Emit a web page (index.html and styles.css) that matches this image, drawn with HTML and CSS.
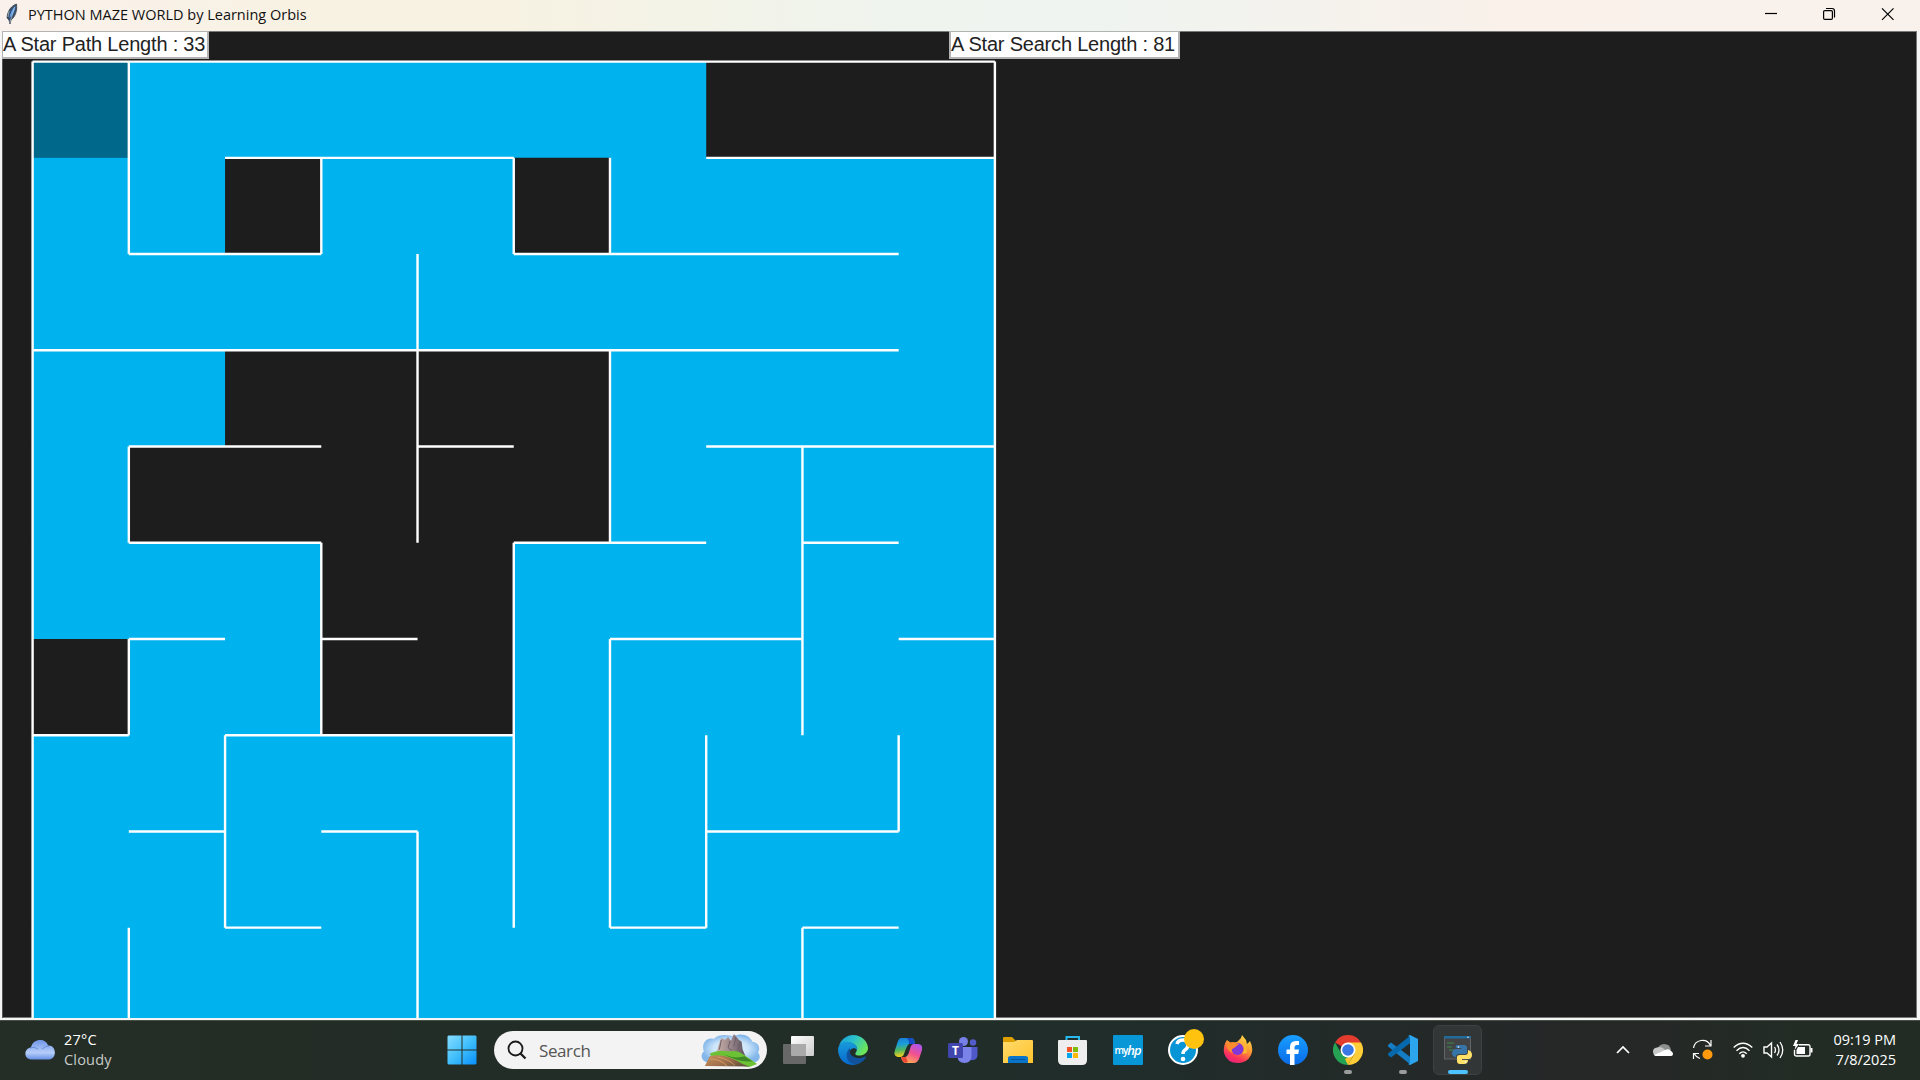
FILE: index.html
```html
<!DOCTYPE html>
<html lang="en">
<head>
<meta charset="utf-8">
<title>PYTHON MAZE WORLD by Learning Orbis</title>
<link rel="stylesheet" href="styles.css">
</head>
<body>
<div class="desktop">
  <header class="titlebar">
    <svg class="feather" width="14" height="22" viewBox="0 0 14 22">
      <path d="M11.5 1C7 2.500 2.500 7 2 15L4 17L5 21L6 17C10 14 12.500 8 11.500 1Z" fill="#35506f" stroke="#39414a" stroke-width=".8"/>
      <path d="M10.500 3C7 6 5 10 4.500 15C8 12 10 8 10.500 3Z" fill="#5e9be8"/>
      <path d="M9.500 4L4.800 20M4 8L3 14" stroke="#b9c6d4" stroke-width=".7" fill="none"/>
    </svg>
    <span class="window-title">PYTHON MAZE WORLD by Learning Orbis</span>
    <div class="window-controls">
      <svg width="58" height="30" viewBox="0 0 58 30"><path d="M23 13.500h12" stroke="#000" stroke-width="1.200"/></svg>
      <svg width="58" height="30" viewBox="0 0 58 30"><rect x="23.600" y="10.600" width="8.800" height="8.800" rx="1.200" fill="none" stroke="#000" stroke-width="1.200"/><path d="M26 8.500h6q2.500 0 2.500 2.500v6.500" fill="none" stroke="#000" stroke-width="1.200"/></svg>
      <svg width="58" height="30" viewBox="0 0 58 30"><path d="M24 8.300l11.500 11.500M35.500 8.300L24 19.800" stroke="#000" stroke-width="1.200"/></svg>
    </div>
  </header>

  <main class="canvas">
    <svg class="maze" width="970" height="961" viewBox="0 0 970 961">
      <g transform="translate(1.6 2.6) scale(96.23)">
        <rect class="searched" x="0" y="0" width="10" height="10"/>
        <rect class="goal" x="0" y="0" width="1" height="1"/>
        <path class="unvisited" d="M7 0h3v1h-3zM2 1h1v1h-1zM5 1h1v1h-1zM2 3h4v1h-4zM1 4h5v1h-5zM3 5h2v2h-2zM0 6h1v1h-1z"/>
        <path class="walls" d="M0 0H10M2 1H5M7 1H10M1 2H3M5 2H9M0 3H9M1 4H3M4 4H5M7 4H10M1 5H3M5 5H7M8 5H9M1 6H2M3 6H4M6 6H8M9 6H10M0 7H1M2 7H5M1 8H2M3 8H4M7 8H9M2 9H3M6 9H7M8 9H9"/>
        <path class="walls" d="M0 0V10M10 0V10M1 0V2M1 4V5M1 6V7M1 9V10M2 7V9M3 1V2M3 5V7M4 2V5M4 8V10M5 1V2M5 5V9M6 1V2M6 3V5M6 6V9M7 7V9M8 4V7M8 9V10M9 7V8"/>
      </g>
    </svg>
    <div class="stat stat-path">A Star Path Length : 33</div>
    <div class="stat stat-search">A Star Search Length : 81</div>
  </main>

  <footer class="taskbar">
    <div class="weather">
      <svg width="30" height="20" viewBox="0 0 30 20">
        <defs><linearGradient id="cloud" x2="0" y2="1"><stop stop-color="#7096e8"/><stop offset=".65" stop-color="#b5cdfa"/><stop offset="1" stop-color="#6790e6"/></linearGradient></defs>
        <path d="M6 19.500C-2 19 -1 8 6 7.500C8-2 21-2 23 5.500C32 5 32 19 24 19.500Z" fill="url(#cloud)"/>
        <path d="M5 8q4-2 8 1M17 9q3-3 7-3" stroke="#688fe0" fill="none"/>
      </svg>
      <div class="weather-text"><span>27°C</span><span class="muted">Cloudy</span></div>
    </div>

    <div class="apps">
      <div class="app start">
        <svg width="30" height="30" viewBox="0 0 30 30">
          <defs><linearGradient id="win" x2="1" y2="1"><stop stop-color="#87dcff"/><stop offset=".5" stop-color="#41bffb"/><stop offset="1" stop-color="#078ffc"/></linearGradient></defs>
          <path fill="url(#win)" d="M1.500.500h13v14h-14v-13zM15.500.500h13l1 1v13h-14zM.500 15.500h14v14h-13l-1-1zM15.500 15.500h14v13l-1 1h-13z"/>
        </svg>
      </div>
      <div class="search">
        <svg width="20" height="20" viewBox="0 0 20 20"><circle cx="8.500" cy="8.500" r="7" fill="none" stroke="#1b1b1b" stroke-width="1.800"/><path d="M13.500 13.500L18.500 18.500" stroke="#1b1b1b" stroke-width="2.300"/></svg>
        <span class="search-label">Search</span>
        <svg class="landscape" width="60" height="35" viewBox="0 0 62 36">
          <defs>
            <radialGradient id="sky"><stop stop-color="#e9f5ff"/><stop offset=".6" stop-color="#cce5fa"/><stop offset="1" stop-color="#83b7ea"/></radialGradient>
            <linearGradient id="rock"><stop stop-color="#c9b0a8"/><stop offset=".5" stop-color="#98858a"/><stop offset="1" stop-color="#5c525e"/></linearGradient>
            <linearGradient id="soil" x2="1" y2=".5"><stop stop-color="#c8935c"/><stop offset=".6" stop-color="#a06f4c"/><stop offset="1" stop-color="#69543f"/></linearGradient>
          </defs>
          <path d="M5 30C-1 27 0 21 3 19C0 12 5 4 13 6C20-1 31 3 34 3C43-1 51 3 53 9C61 10 61 17 59 20C64 27 57 32 50 31Z" fill="url(#sky)"/>
          <path d="M16 20L19 10L21 5L25 7L28 4L31 8L34 1L39 7L42 9L43 17L46 24Z" fill="url(#rock)"/>
          <path d="M21 7L19 17M30 8L28 15L32 18M36 4L34 14M40 10L38 18" stroke="#6d5d68" stroke-width="1" fill="none"/>
          <path d="M9 21Q18 17 28 19Q38 17 45 23Q51 27 58 32L50 35L14 29Z" fill="#6cc235"/>
          <path d="M23 22q12 5 22 2l8 5q-12 2-30-7" fill="#3f8829"/>
          <path d="M4 34L9 24Q24 20 43 32L50 34.500Z" fill="url(#soil)"/>
          <path d="M9 27q10-1 18 7M17 24.500q13 3 18 9" stroke="#dca66c" stroke-width=".8" fill="none"/>
        </svg>
      </div>
      <div class="app"><svg width="32" height="32" viewBox="0 0 32 32">
        <defs><linearGradient id="tv" x2="1" y2="1"><stop stop-color="#fff"/><stop offset="1" stop-color="#ccc"/></linearGradient></defs>
        <rect x="9" y="2" width="23" height="20" rx="1" fill="url(#tv)"/><rect x="1" y="10" width="23" height="20" rx="1" fill="#686868"/><path d="M9 10h14q1 0 1 1v11H10q-1 0-1-1z" fill="#aaa"/></svg></div>
      <div class="app"><svg width="30" height="30" viewBox="0 0 30 30">
        <defs><linearGradient id="edge1" x2="1" y2=".5"><stop stop-color="#1795dd"/><stop offset=".5" stop-color="#2bc2cb"/><stop offset="1" stop-color="#6be55a"/></linearGradient><linearGradient id="edge2" x2="0" y2="1"><stop stop-color="#179bdc"/><stop offset="1" stop-color="#0768cc"/></linearGradient></defs>
        <path d="M1 11C3 4 9 0 15 0C24 0 30 7 30 13C30 19 23 22 18 20C16 18 19 17 19 14C19 8 7 4 1 11Z" fill="url(#edge1)"/>
        <path d="M0 15C0 9 6 6 11 7C17 8 20 12 19 15C17 12 12 13 11 18C10 25 18 29 22 28C10 34 0 25 0 15Z" fill="url(#edge2)"/>
        <path d="M12 13C6 18 8 30 19 29C24 28 28 24 28 21C22 25 14 23 12 18Z" fill="#10529e"/></svg></div>
      <div class="app"><svg width="30" height="28" viewBox="0 0 30 28">
        <defs><linearGradient id="cp1" x2=".1" y2="1"><stop stop-color="#187bd9"/><stop offset=".35" stop-color="#1a9ed8"/><stop offset=".65" stop-color="#4fb760"/><stop offset="1" stop-color="#f5d019"/></linearGradient><linearGradient id="cp2" x1=".8" x2=".3" y2="1"><stop stop-color="#ac55ef"/><stop offset=".5" stop-color="#f3518e"/><stop offset="1" stop-color="#ffb052"/></linearGradient></defs>
        <path d="M8 2H18Q21 2 22 7L16 8Q14 9 11 18Q10 21 7 21H5Q0 20 2 14L5 5Q6 2 8 2Z" fill="url(#cp1)"/>
        <path d="M14 2H18Q21 2 22 8L16 8Q16 4 14 2Z" fill="#164bc8"/>
        <path d="M25 8Q30 8 29 14L26 23Q24 27 21 27H12Q9 26 8 21H12Q15 21 17 13Q18 8 21 8Z" fill="url(#cp2)"/>
        <path d="M8 21h5l2 5-3 1Q9 26 8 21Z" fill="#ed4b38"/></svg></div>
      <div class="app"><svg width="30" height="28" viewBox="0 0 30 28">
        <circle cx="15.500" cy="5.500" r="4.500" fill="#7780e7"/><circle cx="25" cy="6.500" r="3.200" fill="#535cc9"/><path d="M19.500 11h10v8q0 6-7 5z" fill="#5059c9"/><path d="M9.500 11h14v9q0 7-7 7t-7-7z" fill="#7b83eb"/><rect x="0" y="7" width="15" height="15" rx="1.500" fill="#4145ae"/><text class="teams-letter" x="7.500" y="18.500">T</text></svg></div>
      <div class="app"><svg width="30" height="28" viewBox="0 0 30 28">
        <defs><linearGradient id="fold" x2="1" y2="1"><stop stop-color="#ffda6b"/><stop offset="1" stop-color="#ffc32c"/></linearGradient></defs>
        <path d="M0 2Q0 1 1 1H9L13 5V10H0Z" fill="#dda000"/><path d="M0 6H11L14 4H29Q30 4 30 5V27H0Z" fill="url(#fold)"/><path d="M5 27V22Q5 20 8 20H22Q25 20 25 22V27Z" fill="#0874ca"/><path d="M8 23.500H22" stroke="#075399"/></svg></div>
      <div class="app"><svg width="30" height="30" viewBox="0 0 30 30">
        <path d="M8.500 7V2H21V7" fill="none" stroke="#27b8ee" stroke-width="2"/><path d="M0 6Q0 5 1 5H28Q29 5 29 6V25Q29 30 24 30H5Q0 30 0 25Z" fill="#eee"/><path d="M9 12h5v5h-5z" fill="#f35325"/><path d="M15 12h5v5h-5z" fill="#81bc06"/><path d="M9 18h5v5h-5z" fill="#05a6f0"/><path d="M15 18h5v5h-5z" fill="#ffba08"/></svg></div>
      <div class="app"><div class="myhp"><span class="my">my</span><span>hp</span></div></div>
      <div class="app"><svg class="overflowing" width="30" height="30" viewBox="0 0 30 30">
        <circle cx="15" cy="15" r="14" fill="#0795d5" stroke="#fff" stroke-width="2"/><path d="M9 9Q10 5 15 5Q20 5 20 10Q20 13 17 15Q15 16 15 19" fill="none" stroke="#fff" stroke-width="3.500"/><circle cx="15" cy="24" r="2.300" fill="#fff"/><circle cx="26" cy="4" r="10" fill="#ffc20e"/></svg></div>
      <div class="app"><svg width="30" height="30" viewBox="0 0 30 30">
        <defs><linearGradient id="ff" x1=".8" x2=".3" y2="1"><stop stop-color="#ffe14a"/><stop offset=".45" stop-color="#ff9631"/><stop offset=".8" stop-color="#fb315b"/><stop offset="1" stop-color="#e7227f"/></linearGradient></defs>
        <path d="M4 5L8 8L14 7L18 3L19 0L23 5L24 9L27 6Q31 14 28 20Q24 28 15 28Q4 28 1 18Q0 10 4 5Z" fill="url(#ff)"/><circle cx="14.500" cy="14" r="6" fill="#8238d8"/><path d="M3 8L10 7L16 9L11 13Q7 14 10 18Q4 17 3 8Z" fill="#ff8c2c"/><path d="M18 8Q24 13 19 19L24 18L23 9Z" fill="#ffb631"/></svg></div>
      <div class="app"><svg width="30" height="30" viewBox="0 0 30 30">
        <defs><linearGradient id="fb" x2="0" y2="1"><stop stop-color="#189eff"/><stop offset="1" stop-color="#096be9"/></linearGradient></defs>
        <circle cx="15" cy="15" r="15" fill="url(#fb)"/><path d="M12 30V19H8.500V14.500H12V12Q12 6 18 6H21V10H19Q16.500 10 16.500 12.500V14.500H21L20.300 19H16.500V30Z" fill="#fff"/></svg></div>
      <div class="app"><svg width="30" height="30" viewBox="0 0 30 30">
        <path d="M15 15L2 7.500A15 15 0 0 1 28 7.500Z" fill="#e33b2e"/><path d="M15 7.500H28A15 15 0 0 1 15 30L21.500 18.700Z" fill="#ffcd37"/><path d="M2 7.500L8.500 18.700L15 22L15 30A15 15 0 0 1 2 7.500Z" fill="#25a253"/><path d="M21.500 18.700L15 30L12 24Z" fill="#fbc62d"/><circle cx="15" cy="15" r="7.500" fill="#fff"/><circle cx="15" cy="15" r="5.800" fill="#3b78e7"/></svg><i class="running"></i></div>
      <div class="app"><svg width="30" height="30" viewBox="0 0 30 30">
        <path d="M0 10L3 7.500L23 22.500V30L0 11.500Z" fill="#147dc5"/><path d="M0 20L3 22.500L23 7.500V0L0 18.500Z" fill="#0769ad"/><path d="M22 0L30 4V26L22 30L20 29Q22 29 22 27V3Q22 1 20 1Z" fill="#2ca5ed"/></svg><i class="running"></i></div>
      <div class="app active"><svg width="30" height="30" viewBox="0 0 30 30">
        <rect x="1.500" y="2" width="26" height="22" fill="#414345" stroke="#626568"/><rect x="1" y="1" width="27" height="2.500" fill="#216b9b"/><path d="M24 2.200h2" stroke="#cde"/><path d="M4 8h7M4 12h5M6 15h5" stroke="#418b47" stroke-width="1.200"/>
        <path d="M14 10H21Q24 10 24 13V17Q24 19 21 19H16Q13 19 13 22H12Q9 21 9 18Q9 15 12 14H18V13H13Q12 10 14 10Z" fill="#3775a9"/><path d="M25 15Q29 16 29 20Q29 23 26 24H19V25H25Q25 29 21 29H17Q14 29 14 26V22Q14 20 17 20H22Q25 20 25 17Z" fill="#ffe169"/><circle cx="15.500" cy="12" r=".8" fill="#fff"/><circle cx="22.500" cy="27" r=".8" fill="#fff"/></svg><i class="running current"></i></div>
    </div>

    <div class="tray">
      <svg width="14" height="10" viewBox="0 0 14 10"><path d="M1 8L7 2L13 8" fill="none" stroke="#fff" stroke-width="1.700"/></svg>
      <svg class="onedrive" width="20" height="14" viewBox="0 0 20 14"><path d="M4 7Q6 1 11 1Q17 1 18 7L14 10H4Z" fill="#8d8f8f"/><path d="M3 13Q0 12 0 8.500Q0 5 4 4.500Q8 3 11 6L18 12Z" fill="#c8c8c8"/><path d="M3 13Q2 13 1 12L12 7Q16 5 18 8Q20 9 20 11Q20 13 17 13Z" fill="#fff"/></svg>
      <svg class="update" width="22" height="22" viewBox="0 0 22 22"><path d="M1.500 9A9 9 0 0 1 18.500 6.500M19 1V7H13M8 19.500Q4 18 2 14.500M1.500 20V14.500H7" fill="none" stroke="#fff" stroke-width="1.200"/><circle cx="15.500" cy="15.500" r="5" fill="#ff9a0d"/></svg>
      <svg class="wifi" width="20" height="16" viewBox="0 0 20 16"><path d="M.700 5.500Q10-3 19.300 5.500M3.500 8.700Q10 2.500 16.500 8.700M6.300 11.700Q10 8 13.700 11.700" fill="none" stroke="#fff" stroke-width="1.400"/><circle cx="10" cy="13.800" r="1.900" fill="#fff"/></svg>
      <svg class="volume" width="21" height="18" viewBox="0 0 21 18"><path d="M1 6H4L8.500 2V16L4 12H1Z" fill="none" stroke="#fff" stroke-width="1.400"/><path d="M11.500 6Q13.500 9 11.500 12M14 3.500Q18 9 14 14.500M17 1Q22.500 9 17 17" fill="none" stroke="#fff" stroke-width="1.300"/></svg>
      <svg class="battery" width="20" height="18" viewBox="0 0 20 18"><path d="M6 4.700H15.500Q17 4.700 17 6.500V14Q17 16 15.500 16H3.500Q1.500 16 1.500 14V10" fill="none" stroke="#fff" stroke-width="1.400"/><path d="M5 7H12V14H3.500V10Z" fill="#fff"/><path d="M18.500 8V12.500" stroke="#fff" stroke-width="2"/><path d="M2.500 0L0 6H2.500L1.500 10L6 4H3.500L5 0Z" fill="#fff"/></svg>
      <div class="clock"><span>09:19 PM</span><span>7/8/2025</span></div>
    </div>
  </footer>
</div>
</body>
</html>
```
FILE: styles.css
```css
* { box-sizing: border-box; }
body { margin: 0; overflow: hidden; }
svg { display: block; flex: none; }

.desktop {
  display: flex;
  flex-direction: column;
  width: 1920px;
  height: 1080px;
  font-family: "Open Sans", "Noto Sans", sans-serif;
}

.titlebar {
  display: flex;
  align-items: flex-start;
  height: 31px;
  background: linear-gradient(90deg, #fbf1ec 0, #f8f2e3 300px, #f7f2e2 500px, #eff4ee 900px, #eff4f1 1080px, #f9f1ea 1500px, #f9f1eb 100%);
}
.feather { margin: 3px 0 0 5px; }
.window-title {
  margin-left: 9px;
  font-size: 14.5px;
  line-height: 29px;
  white-space: nowrap;
  color: #111;
}
.window-controls { display: flex; margin-left: auto; margin-right: 4px; }

.canvas {
  position: relative;
  height: 989px;
  padding: 28px 0 0 29px;
  overflow: hidden;
  background: #1d1d1d;
  border: solid #f5f5f5;
  border-width: 0 3px 2px 2px;
  box-shadow: inset 0 1px #77797a, inset 1px 0 #555, inset -1px -1px #777;
}
.searched { fill: #00b2ee; }
.goal { fill: #00688b; }
.unvisited { fill: #1d1d1d; }
.walls { fill: none; stroke: #fff; stroke-width: 0.025; }

.stat {
  position: absolute;
  top: -1px;
  height: 29px;
  border: 2px solid #b3b3b3;
  background: #fff;
  color: #222;
  font: 20px/25px "Liberation Sans", Arial, sans-serif;
  letter-spacing: -0.2px;
  white-space: nowrap;
}
.stat-path { left: -1px; width: 208px; }
.stat-search { left: 947px; width: 231px; }

.taskbar {
  display: flex;
  align-items: center;
  height: 60px;
  padding-bottom: 1px;
  color: #fff;
  background: linear-gradient(90deg, #242d26 0, #222d27 700px, #202d2a 1120px, #242928 1450px, #262727 1620px, #222c25 1800px, #222c25 100%);
  border-top: 1px solid #455047;
}
.weather { display: flex; align-items: center; gap: 9px; width: 433px; padding-left: 25px; }
.weather-text { display: flex; flex-direction: column; padding-bottom: 1px; font-size: 14.5px; line-height: 20px; letter-spacing: 0.2px; }
.muted { color: #c8cbc9; }

.apps { display: flex; align-items: center; }
.app {
  position: relative;
  display: flex;
  align-items: center;
  justify-content: center;
  width: 49px;
  height: 50px;
  margin: 0 3px;
  border-radius: 6px;
}
.start { margin: 0 8px 0 4px; }
.active { background: #333636; border: 1px solid #3e4141; }
.overflowing { overflow: visible; }
.running {
  position: absolute;
  bottom: 1px;
  width: 8px;
  height: 4px;
  border-radius: 2px;
  background: #9a9d9b;
}
.current { bottom: 0; width: 20px; background: #4cc2ff; }

.search {
  display: flex;
  align-items: center;
  width: 273px;
  height: 38px;
  margin-right: 3px;
  padding: 0 6px 0 13px;
  border-radius: 19px;
  background: #f3f3f3;
}
.search-label { margin-left: 12px; color: #555; font-size: 17px; letter-spacing: -0.4px; }
.landscape { margin-left: auto; }

.teams-letter { fill: #fff; font: 700 12px "Open Sans", sans-serif; text-anchor: middle; }
.myhp {
  display: flex;
  align-items: center;
  justify-content: center;
  width: 30px;
  height: 30px;
  border-radius: 1px;
  background: #0796d6;
  font: italic 600 13px/30px "Open Sans", sans-serif;
  letter-spacing: -1px;
}
.my { font-size: 10px; font-style: normal; }

.tray { display: flex; align-items: center; margin-left: auto; padding-right: 24px; }
.onedrive { margin-left: 23px; }
.update { margin-left: 19px; }
.wifi { margin-left: 19px; }
.volume { margin-left: 10px; }
.battery { margin-left: 9px; margin-right: 1px; margin-top: -2px; }
.clock { display: flex; flex-direction: column; width: 82px; padding-bottom: 1px; text-align: right; font-size: 14.5px; line-height: 20px; white-space: nowrap; }
```
